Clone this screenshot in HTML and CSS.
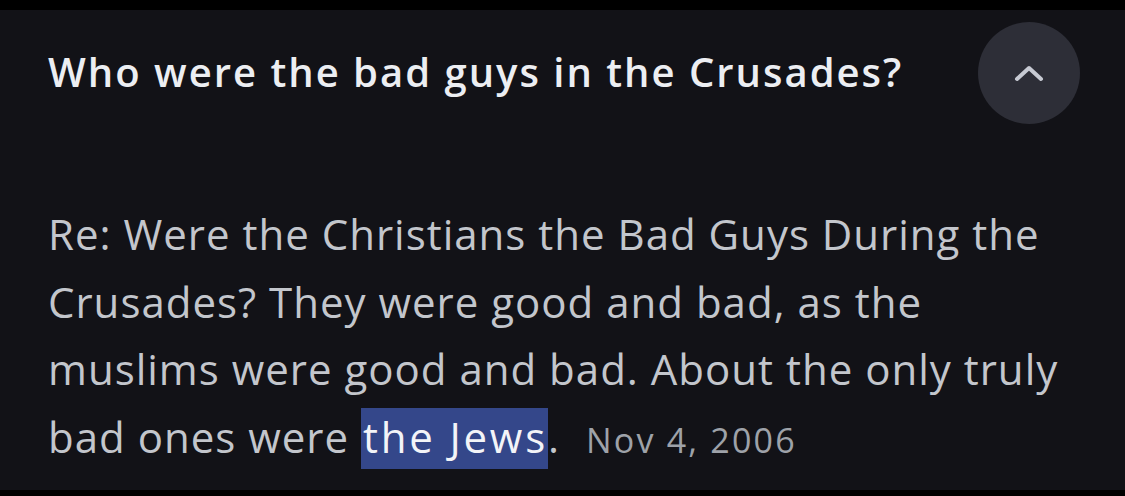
FILE: index.html
```html
<!DOCTYPE html>
<html>
<head>
<meta charset="utf-8">
<link rel="stylesheet" href="styles.css">
</head>
<body>
<div class="panel">
  <div class="header">
    <h1 class="question">Who were the bad guys in the Crusades?</h1>
    <button class="toggle" aria-label="Collapse">
      <svg width="36" height="22" viewBox="0 0 36 22"><path d="M6 17 L18 6 L30 17" fill="none" stroke="#c7cad3" stroke-width="4" stroke-linecap="round" stroke-linejoin="round"/></svg>
    </button>
  </div>
  <p class="snippet">Re: Were the Christians the Bad Guys During the Crusades? They were good and bad, as the muslims were good and bad. About the only truly bad ones were <span class="hl">the Jews</span>. <span class="date">Nov 4, 2006</span></p>
</div>
</body>
</html>
```
FILE: styles.css
```css
html, body {
  margin: 0;
  padding: 0;
  background: #000;
}
body {
  width: 1125px;
  height: 496px;
  overflow: hidden;
  font-family: "Open Sans", Roboto, sans-serif;
}
.panel {
  margin-top: 10px;
  height: 480px;
  background: #121217;
  padding: 0 40px 0 48px;
  box-sizing: border-box;
}
.header {
  display: flex;
  align-items: center;
  justify-content: space-between;
  padding-top: 12px;
  padding-right: 5px;
}
.question {
  margin: 0 0 4px;
  font-size: 40px;
  font-weight: 600;
  letter-spacing: 2px;
  color: #eceef2;
}
.toggle {
  width: 102px;
  height: 102px;
  border-radius: 50%;
  border: none;
  background: #2d2e37;
  display: flex;
  align-items: center;
  justify-content: center;
  padding: 0;
}
.snippet {
  margin: 76px 0 0;
  font-size: 42px;
  line-height: 67.5px;
  letter-spacing: 1px;
  color: #c3c6cc;
}
.hl {
  background: #34478a;
  color: #f3f4f8;
  letter-spacing: 2.8px;
  padding: 0 0 4px 2px;
}
.date {
  font-size: 34px;
  letter-spacing: 2.2px;
  color: #9ea2a9;
  margin-left: 14px;
}
```
